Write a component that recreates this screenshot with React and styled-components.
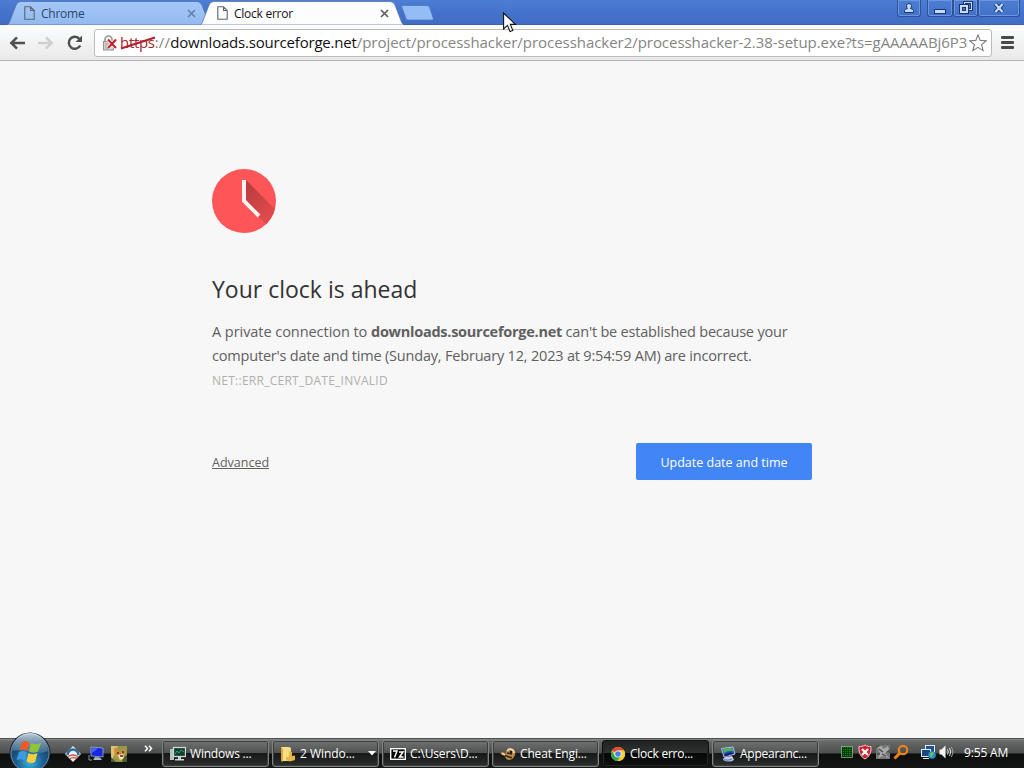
import React from 'react';
import styled, { createGlobalStyle } from 'styled-components';

const GlobalStyle = createGlobalStyle`
    * {
        box-sizing: border-box;
    }
    body {
        margin: 0;
        overflow: hidden;
        font-family: "Open Sans", "Noto Sans", sans-serif;
    }
`;

const tasks = [
    { text: 'Windows ...', icon: 'monitor', spacing: -0.2 },
    { text: '2 Windo...', icon: 'folder', arrow: true, spacing: -0.05 },
    { text: 'C:\\Users\\D...', icon: 'zip', spacing: -0.15 },
    { text: 'Cheat Engi...', icon: 'cheat', spacing: -0.15 },
    { text: 'Clock erro...', icon: 'chrome', active: true, spacing: -0.25 },
    { text: 'Appearanc...', icon: 'display', spacing: -0.25 },
];

const TabShape = ({ active }) => (
    <Shape width="204" height="25" viewBox="0 0 204 25">
        <defs>
            <linearGradient id="tabBack" x1="0" y1="0" x2="0" y2="1">
                <stop offset="0" stopColor="#a4c8f7" />
                <stop offset="1" stopColor="#93b9ef" />
            </linearGradient>
        </defs>
        <path
            d="M0 25 Q1.5 24.500 2.500 22 L9 5 Q10.500 1.500 13.500 1.500 H190 Q193.500 1.500 195 5 L201.500 22 Q202.500 24.500 204 25 Z"
            fill={active ? '#fdfdfe' : 'url(#tabBack)'}
            stroke={active ? '#5575b4' : '#4f70b0'}
            strokeWidth="0.8"
        />
    </Shape>
);

const PageIcon = () => (
    <svg width="11" height="14" viewBox="0 0 11 14" fill="none" stroke="#5c6470" strokeWidth="1.1">
        <path d="M.8 .8H6.5L10.2 4.5V13.2H.8Z M6.5 .8V4.5H10.2" />
    </svg>
);

const CloseIcon = ({ color }) => (
    <svg width="9" height="9" viewBox="0 0 9 9" stroke={color} strokeWidth="1.7">
        <path d="M1 1L8 8M8 1L1 8" />
    </svg>
);

const ArrowIcon = ({ color, flip }) => (
    <svg width="16" height="14" viewBox="0 0 16 14" fill="none" stroke={color} strokeWidth="2.5">
        <path d={flip ? 'M0 7H13.5M8 1.3L13.7 7L8 12.7' : 'M16 7H2.5M8 1.3L2.3 7L8 12.7'} />
    </svg>
);

const ReloadIcon = () => (
    <svg width="16" height="16" viewBox="0 0 16 16">
        <path d="M12.5 4A6 6 0 1 0 13.2 10.5" fill="none" stroke="#505050" strokeWidth="2.5" />
        <path d="M15 .5V7H8.5Z" fill="#505050" />
    </svg>
);

const LockIcon = () => (
    <svg width="16" height="16" viewBox="0 0 16 16">
        <path d="M3 8V4.5A3.5 3.5 0 0 1 10 4.5V8" fill="none" stroke="#96938f" strokeWidth="1.6" />
        <rect x="1.5" y="6.5" width="10" height="8.5" fill="#d4d0ca" stroke="#96938f" />
        <path d="M3 9H8M3 11H7M3 13H8" stroke="#aaa69f" />
        <path d="M6 4.500L14 13M14 4.500L6 13" stroke="#fff" strokeWidth="3.4" />
        <path d="M6 4.500L14 13M14 4.500L6 13" stroke="#c0202c" strokeWidth="2" />
    </svg>
);

const StarIcon = () => (
    <svg width="18" height="18" viewBox="0 0 18 18" fill="#fff" stroke="#7d7d7d" strokeWidth="1.1">
        <path d="M9 .9L11.2 6.4L17.3 6.8L12.6 10.6L14.1 16.6L9 13.3L3.9 16.6L5.4 10.6L.7 6.8L6.8 6.4Z" />
    </svg>
);

const MenuIcon = () => (
    <svg width="13" height="13" viewBox="0 0 13 13" fill="#4a4a4a">
        <rect width="13" height="3" rx="1" />
        <rect y="5" width="13" height="3" rx="1" />
        <rect y="10" width="13" height="3" rx="1" />
    </svg>
);

const ClockIcon = () => (
    <svg width="64" height="64" viewBox="0 0 64 64">
        <defs>
            <clipPath id="face"><circle cx="32" cy="32" r="32" /></clipPath>
            <linearGradient id="shade" x1="32" y1="20" x2="58" y2="46" gradientUnits="userSpaceOnUse">
                <stop offset="0" stopColor="#b93d3f" />
                <stop offset="1" stopColor="#e04a4c" />
            </linearGradient>
        </defs>
        <circle cx="32" cy="32" r="32" fill="#fe5558" />
        <path d="M34 11L66 43V66L46 47.5L34 31Z" fill="url(#shade)" clipPath="url(#face)" />
        <path d="M32 11V32L47 47" fill="none" stroke="#fbf3ef" strokeWidth="4" />
    </svg>
);

const CursorIcon = () => (
    <svg width="14" height="22" viewBox="0 0 14 22">
        <path d="M.6 1V17L4.5 13.4L7 19.6L9.8 18.4L7.3 12.4H12.4Z" fill="#fff" stroke="#111" strokeWidth="1.1" />
    </svg>
);

const StartOrb = () => (
    <svg width="44" height="36" viewBox="0 0 44 36">
        <defs>
            <radialGradient id="orb" cx=".5" cy=".75" r=".7">
                <stop offset="0" stopColor="#39b5df" />
                <stop offset=".5" stopColor="#1c5e91" />
                <stop offset="1" stopColor="#14324f" />
            </radialGradient>
            <linearGradient id="shine" x1="0" y1="0" x2="0" y2="1">
                <stop offset="0" stopColor="#d5e2ec" stopOpacity=".9" />
                <stop offset="1" stopColor="#7ea3bf" stopOpacity=".35" />
            </linearGradient>
        </defs>
        <circle cx="22" cy="21" r="20.5" fill="#17242f" />
        <circle cx="22" cy="21" r="19" fill="url(#orb)" stroke="#6f93ab" strokeWidth="1" />
        <path d="M4 19A18 18 0 0 1 40 19C32 24 13 16 4 19Z" fill="url(#shine)" />
        <path d="M14 10C17 8 19 9 21.500 10.500L19.500 19C17 17 15 17 11.500 18.500Z" fill="#ee5a24" />
        <path d="M23 11C26 12.500 29 12.500 33 11L30 19.500C27 21 24 21 21 19.500Z" fill="#90c43c" />
        <path d="M11 20C14 18.500 17 18.500 19 20.500L17 29C14.500 27 12 27 8.500 28Z" fill="#3c9be0" />
        <path d="M20.500 21C23.500 23 26 22.500 29.500 21L27 30C24 31.500 21 31 18.500 29.500Z" fill="#fbcf3a" />
    </svg>
);

const icons = {
    obama: (
        <>
            <path d="M8 0L16 8L8 16L0 8Z" fill="#e8eef2" />
            <circle cx="8" cy="8" r="5.5" fill="#e9f0f5" />
            <path d="M2.5 9A5.5 5.5 0 0 1 13.5 9" fill="none" stroke="#286a9c" strokeWidth="2.6" />
            <path d="M3 10.5Q8 7.5 13 10.5M4.5 13Q8 10.5 12 12.5" fill="none" stroke="#d64a40" strokeWidth="1.4" />
        </>
    ),
    desktop: (
        <>
            <path d="M3 1L15 2V11L3 10Z" fill="#1727dc" stroke="#9fb3d8" strokeWidth=".8" />
            <path d="M4 2L10 2.5L4 7Z" fill="#4468f6" />
            <path d="M7 11L12 11.5L14 14H5Z" fill="#a9b4c8" />
            <path d="M1 9V14H4" fill="none" stroke="#8894a8" />
        </>
    ),
    dog: (
        <>
            <rect width="16" height="16" fill="#8f9a4c" />
            <path d="M0 0H7L2 12L0 14Z" fill="#e0c16f" />
            <path d="M3 3L5 1L8 5L12 4L14 1L15 6L14 12L9 15L4 11Z" fill="#c98f3f" />
            <path d="M7 9L12 8L13 12L9 14Z" fill="#f3e7c5" />
            <path d="M6 7H8M11 6H13M9 10H12" stroke="#4b3217" strokeWidth="1.4" />
            <path d="M0 11L5 16H0ZM13 11L16 9V16H11Z" fill="#4d5d2d" />
        </>
    ),
    monitor: (
        <>
            <path d="M0 3H4V14H0Z" fill="#b7c2bc" />
            <rect x="3.5" y="1.5" width="12" height="9" fill="#123e31" stroke="#d0d8d4" strokeWidth="1.3" />
            <path d="M5 8L7 5L9 7L11 4L14 6" fill="none" stroke="#3c9c68" />
            <path d="M8 11H11V13H14V14.5H5V13H8Z" fill="#cad3cf" />
        </>
    ),
    folder: (
        <>
            <path d="M1 1H9L11 2V15H1Z" fill="#f7dd84" />
            <path d="M1 1L3 3V16L1 15Z" fill="#d8a936" />
            <path d="M9 5L12 6V10L15 9.500V14L10 15.500L6 14V11H9Z" fill="#e9b645" />
        </>
    ),
    zip: (
        <>
            <rect x=".7" y="2.7" width="14.6" height="10.6" fill="#000" stroke="#fff" strokeWidth="1.4" />
            <path d="M3 5H7L4.5 11.5M9 6H13L9.5 11H13.5" fill="none" stroke="#fff" strokeWidth="1.5" />
        </>
    ),
    cheat: (
        <>
            <path d="M0 7L3 6L5 8L7 4C9 1 15 2 15 6C16 9 13 14 9 14C5 14 6 9 2 9Z" fill="#b98a4b" />
            <path d="M7 5C9 1.500 14 3 14 7M2 7.500L5 8.500" fill="none" stroke="#f2dfb4" strokeWidth="1.5" />
            <path d="M5 10C7 9 8 12 12 11.500M7 7L12 8" fill="none" stroke="#352411" strokeWidth="1.5" />
            <circle cx="11" cy="6" r="1.2" fill="#231407" />
        </>
    ),
    chrome: (
        <>
            <circle cx="8" cy="8" r="7" fill="#f9cf31" />
            <path d="M8 8L1.9 4.5A7 7 0 0 1 14.1 4.5H8Z" fill="#e4473b" />
            <path d="M8 8L4.7 10L1.9 4.5A7 7 0 0 0 7.5 15L11.2 9.9Z" fill="#35a354" />
            <path d="M8 4.5H14.1A7 7 0 0 1 7.5 15L11.2 9.9Z" fill="#f9cf31" />
            <circle cx="8" cy="8" r="3.5" fill="#fff" />
            <circle cx="8" cy="8" r="2.8" fill="#4385ee" />
        </>
    ),
    display: (
        <>
            <path d="M1.500 2.500L13 1L15 8L4 11Z" fill="#2b50c8" stroke="#b5c6ea" />
            <path d="M3 3.500Q8 1 12.500 2.500L13.500 5Q8 4 4 7Z" fill="#4cb848" />
            <path d="M4 9Q9 5 14 7.500L5 10.5Z" fill="#12266e" />
            <path d="M4 11.500L12 10L14 14Q9 17 3 14Z" fill="#c6d2ee" />
            <path d="M4 13.500Q8 15 12 13" stroke="#5976bd" strokeWidth="1.3" fill="none" />
        </>
    ),
    meter: (
        <>
            <rect x="2.5" y="2.5" width="11" height="11" fill="#063c0a" stroke="#9bbd9b" strokeWidth=".7" />
            <path d="M4.5 3V13M6.5 3V13M8.5 3V13M10.5 3V13M12 3V13" stroke="#128a1a" strokeDasharray="1 1" />
        </>
    ),
    shield: (
        <>
            <path d="M8 1C10 2.5 12 2.5 14 2.5C14.5 9 12 13 8 15C4 13 1.5 9 2 2.5C4 2.5 6 2.5 8 1Z" fill="#d0212d" stroke="#ecc8ca" />
            <path d="M5 5L11 11M11 5L5 11" stroke="#fff" strokeWidth="2.2" />
        </>
    ),
    gear: (
        <>
            <rect x="1" y="1" width="14" height="14" fill="#777" />
            <path d="M2 3L6 2L9 5L13 2L14 6L10 9L14 14L8 12L3 14L5 9Z" fill="#a9a9a9" />
            <path d="M4 5L8 8M7 10L11 12M2 10H5" stroke="#444" fill="none" strokeWidth="1.3" />
            <path d="M1 1H6L1 5ZM11 8L15 5V9Z" fill="#555" />
        </>
    ),
    search: (
        <>
            <circle cx="10" cy="6" r="4.2" fill="none" stroke="#f08119" strokeWidth="2.2" />
            <path d="M7 9L1.5 14.5" stroke="#f08119" strokeWidth="3" />
        </>
    ),
    network: (
        <>
            <rect x="5.5" y="1.5" width="9" height="7" fill="#1c5595" stroke="#e1ebf5" />
            <rect x="1.5" y="5.5" width="9" height="7" fill="#174a83" stroke="#e1ebf5" />
            <path d="M3 14.5H9" stroke="#e1ebf5" />
            <circle cx="12" cy="11" r="3.8" fill="#278bd1" />
            <path d="M10 9L13 8L14 10L12 12L12 14L10 12Z" fill="#68c355" />
        </>
    ),
    volume: (
        <>
            <path d="M1.5 5.5H3.5L7.5 1.5V14.5L3.5 10.5H1.5Z" fill="#f4f4f4" />
            <path d="M9.5 5.5Q11 8 9.5 10.5M11.5 4Q14 8 11.5 12" fill="none" stroke="#e5e5e5" />
            <path d="M13.3 3Q16.500 8 13.3 13" fill="none" stroke="#a5a5a5" />
        </>
    ),
};

const Icon = ({ name, size = 16 }) => (
    <svg width={size} height={size} viewBox="0 0 16 16">{icons[name]}</svg>
);

const BrowserTab = ({ title, active }) => (
    <Tab $active={active}>
        <TabShape active={active} />
        <TabContent>
            <PageIcon />
            <TabTitle $active={active}>{title}</TabTitle>
            <CloseIcon color={active ? '#5b5b5b' : '#6681a8'} />
        </TabContent>
    </Tab>
);

const App = () => {
    return (
        <Screen>
            <GlobalStyle />
            <TitleBar>
                <BrowserTab title="Chrome" />
                <BrowserTab title="Clock error" active />
                <svg width="36" height="16" viewBox="0 0 36 16">
                    <path d="M3 .5H26C28 .5 29 1 29.5 2.5L33 12.500C33.5 14.500 33 15 31.5 15H9C7 15 6.5 14.5 5.8 13L2 2.5C1.5 1 1.5 .5 3 .5Z" fill="#94bdf5" stroke="#4f79c2" strokeWidth=".8" />
                </svg>
                <WindowButtons>
                    <WinButton $width={24} $gap={6}>
                        <svg width="12" height="12" viewBox="0 0 12 12" fill="#c5dbf8" stroke="#1c366c" strokeWidth="1">
                            <path d="M1.5 10.5V8.500Q2 7 4.5 6.5Q3.5 5.5 3.5 3.5Q4 1.5 6 1.5T8.5 3.5Q8.5 5.5 7.5 6.5Q10 7 10.5 8.500V10.5Z" />
                        </svg>
                    </WinButton>
                    <WinButton $width={26}>
                        <svg width="14" height="12" viewBox="0 0 14 12"><rect x="1.5" y="7.5" width="11" height="4" fill="#c5dbf8" stroke="#1c366c" /></svg>
                    </WinButton>
                    <WinButton $width={25}>
                        <svg width="14" height="14" viewBox="0 0 14 14">
                            <rect x="4.5" y=".5" width="9" height="9" fill="#c5dbf8" stroke="#1c366c" />
                            <rect x="6.500" y="2.500" width="5" height="5" fill="#4876cc" stroke="#1c366c" />
                            <rect x=".5" y="3.5" width="9" height="9" fill="#c5dbf8" stroke="#1c366c" />
                            <rect x="3.5" y="6.5" width="3" height="3" fill="#4876cc" stroke="#1c366c" />
                        </svg>
                    </WinButton>
                    <WinButton $width={42}>
                        <svg width="12" height="12" viewBox="0 0 12 12">
                            <path d="M2.5 2L9.5 10M9.5 2L2.5 10" stroke="#1c366c" strokeWidth="4" />
                            <path d="M2.5 2L9.5 10M9.5 2L2.5 10" stroke="#c5dbf8" strokeWidth="2.2" />
                        </svg>
                    </WinButton>
                </WindowButtons>
            </TitleBar>
            <Toolbar>
                <NavButtons>
                    <ArrowIcon color="#505050" />
                    <ArrowIcon color="#cfcfcf" flip />
                    <ReloadIcon />
                </NavButtons>
                <AddressBar>
                    <LockIcon />
                    <Url>
                        <Scheme>
                            https
                            <Strike width="37" height="15" viewBox="0 0 37 15"><path d="M1 12.5L35 1.5" stroke="#b0202a" strokeWidth="2" /></Strike>
                        </Scheme>
                        <UrlPart $spacing={0.2}>://</UrlPart>
                        <UrlPart $color="#111" $spacing={-0.19}>downloads.sourceforge.net</UrlPart>
                        <UrlPart $spacing={-0.04}>/project/processhacker/processhacker2/processhacker-2.38-setup.exe?ts=gAAAAABj6P3</UrlPart>
                    </Url>
                    <StarIcon />
                </AddressBar>
                <MenuIcon />
            </Toolbar>
            <Page>
                <Content>
                    <ClockIcon />
                    <Title>Your clock is ahead</Title>
                    <Message>
                        <Line>
                            <Words $spacing={-0.05}>A private connection to </Words>
                            <Words as="b" $spacing={-0.26}>downloads.sourceforge.net</Words>
                            <Words $spacing={-0.2}> can't be established because your</Words>
                        </Line>
                        <Line>
                            <Words $spacing={-0.19}>computer's date and time (Sunday, February 12, 2023 at 9:54:59 AM) are incorrect.</Words>
                        </Line>
                    </Message>
                    <ErrorCode>NET::ERR_CERT_DATE_INVALID</ErrorCode>
                    <Actions>
                        <Advanced>Advanced</Advanced>
                        <UpdateBtn>Update date and time</UpdateBtn>
                    </Actions>
                </Content>
            </Page>
            <TaskBar>
                <Start><StartOrb /></Start>
                <QuickLaunch>
                    <Icon name="obama" />
                    <Icon name="desktop" />
                    <Icon name="dog" />
                </QuickLaunch>
                <More>
                    <svg width="9" height="7" viewBox="0 0 9 7" fill="none" stroke="#fff" strokeWidth="1.5"><path d="M1 .8L3.5 3.5L1 6.2M5 .8L7.5 3.5L5 6.2" /></svg>
                </More>
                <Tasks>
                    {tasks.map((task, index) => (
                        <Task key={index} $active={task.active}>
                            <Icon name={task.icon} />
                            <TaskText $spacing={task.spacing}>{task.text}</TaskText>
                            {task.arrow && <svg width="8" height="5" viewBox="0 0 8 5"><path d="M0 0H8L4 4.5Z" fill="#fff" /></svg>}
                        </Task>
                    ))}
                </Tasks>
                <Tray>
                    <Icon name="meter" />
                    <Icon name="shield" />
                    <Icon name="gear" />
                    <Icon name="search" />
                </Tray>
                <Tray $left={11}>
                    <Icon name="network" />
                    <Icon name="volume" />
                </Tray>
                <Time>9:55 AM</Time>
            </TaskBar>
            <Cursor><CursorIcon /></Cursor>
        </Screen>
    );
}

const Screen = styled.div`
    display: flex;
    flex-direction: column;
    width: 1024px;
    height: 768px;
    background-color: #f7f7f7;
    overflow: hidden;
`;

const TitleBar = styled.div`
    display: flex;
    height: 25px;
    flex: none;
    padding-left: 7px;
    background: linear-gradient(#4d7ed3, #4371c9 60%, #426dc5);
    border-bottom: 1px solid #3e62a6;
`;

const Tab = styled.div`
    display: grid;
    width: 204px;
    height: 25px;
    flex: none;
    margin-right: ${props => props.$active ? '-4px' : '-11px'};
    z-index: ${props => props.$active ? 2 : 1};

    & + svg {
        margin-top: 5px;
    }
`;

const Shape = styled.svg`
    grid-area: 1 / 1;
`;

const TabContent = styled.div`
    grid-area: 1 / 1;
    display: flex;
    align-items: center;
    padding: 1px 15px 0 17px;
`;

const TabTitle = styled.span`
    flex: 1;
    margin-left: 6px;
    font-size: 12px;
    letter-spacing: -0.25px;
    color: ${props => props.$active ? '#111' : '#2b4469'};
`;

const WindowButtons = styled.div`
    display: flex;
    height: 17px;
    margin-left: auto;
    margin-right: 4px;
`;

const WinButton = styled.div`
    display: flex;
    align-items: center;
    justify-content: center;
    width: ${props => props.$width}px;
    margin-right: ${props => props.$gap || 0}px;
    border: 1px solid #2d529b;
    border-top: none;
    border-radius: 0 0 3px 3px;
    box-shadow: inset 0 0 0 1px #6c95de;
`;

const Toolbar = styled.div`
    display: flex;
    align-items: center;
    flex: none;
    height: 36px;
    padding: 0 10px 0 9px;
    background: linear-gradient(#fcfdfe, #e9e9e9);
    border-bottom: 1px solid #b4b4b4;
`;

const NavButtons = styled.div`
    display: flex;
    align-items: center;
    gap: 13px;
    width: 85px;
`;

const AddressBar = styled.div`
    display: flex;
    align-items: center;
    width: 898px;
    height: 28px;
    margin-right: 9px;
    padding: 0 4px 0 7px;
    background-color: #fff;
    border: 1px solid #bdbdb8;
    border-radius: 3px;
`;

const Url = styled.div`
    display: flex;
    flex: 1;
    min-width: 0;
    margin-left: 2px;
    padding-bottom: 2px;
    overflow: hidden;
    white-space: nowrap;
    font-size: 15px;
    line-height: 24px;
`;

const UrlPart = styled.span`
    color: ${props => props.$color || '#858585'};
    letter-spacing: ${props => props.$spacing}px;
`;

const Scheme = styled.span`
    position: relative;
    color: #a8242c;
    letter-spacing: -0.3px;
`;

const Strike = styled.svg`
    position: absolute;
    left: 0;
    top: 6px;
`;

const Page = styled.div`
    flex: 1;
    display: flex;
    justify-content: center;
    padding-top: 108px;
`;

const Content = styled.div`
    width: 600px;
`;

const Title = styled.h1`
    margin: 33px 0 0;
    font-size: 23px;
    font-weight: 400;
    line-height: 36px;
    color: #333;
`;

const Message = styled.div`
    margin-top: 13px;
    font-size: 14.5px;
    line-height: 24px;
    color: #606060;
`;

const Line = styled.div`
    white-space: pre;
`;

const Words = styled.span`
    letter-spacing: ${props => props.$spacing}px;
`;

const ErrorCode = styled.div`
    margin-top: 1px;
    font-size: 12px;
    line-height: 24px;
    letter-spacing: 0.26px;
    color: #b0b0ac;
`;

const Actions = styled.div`
    display: flex;
    align-items: center;
    justify-content: space-between;
    margin-top: 50px;
`;

const Advanced = styled.a`
    padding-top: 2px;
    font-size: 12.5px;
    color: #606060;
    text-decoration: underline;
`;

const UpdateBtn = styled.button`
    width: 176px;
    height: 37px;
    padding: 1px 0 0;
    border: none;
    border-radius: 2px;
    background-color: #4285f4;
    color: #fff;
    font-family: inherit;
    font-size: 12.5px;
    font-weight: 500;
`;

const TaskBar = styled.div`
    display: flex;
    flex: none;
    height: 30px;
    background: linear-gradient(#8b8d8c 0, #686a69 2px, #4d4f4e 14px, #0c0e0d 15px, #151716 100%);
    border-top: 1px solid #4e514f;
`;

const Start = styled.div`
    width: 60px;
    padding-left: 8px;
    margin-top: -7px;
`;

const QuickLaunch = styled.div`
    display: flex;
    align-items: center;
    gap: 7px;
    width: 84px;
    padding-left: 5px;
`;

const More = styled.div`
    display: flex;
    width: 18px;
    padding-top: 6px;
`;

const Tasks = styled.div`
    display: flex;
    gap: 3px;
    padding: 1px 0;
    width: 660px;
`;

const Task = styled.div`
    display: flex;
    align-items: center;
    width: 107px;
    height: 27px;
    padding: 0 2px 0 7px;
    border: 1px solid ${props => props.$active ? '#101211' : '#818382'};
    border-radius: 3px;
    box-shadow: inset 0 0 0 1px ${props => props.$active ? '#242625' : '#3d3f3e'};
    background: ${props => props.$active
        ? 'linear-gradient(#202221, #303231 48%, #050706 50%, #101211)'
        : 'linear-gradient(#707271, #505251 48%, #171918 50%, #2c2e2d)'};
`;

const TaskText = styled.span`
    flex: 1;
    margin-left: 4px;
    font-size: 12px;
    white-space: nowrap;
    color: #fff;
    letter-spacing: ${props => props.$spacing}px;
`;

const Tray = styled.div`
    display: flex;
    align-items: center;
    gap: 2px;
    height: 25px;
    margin-left: ${props => props.$left || 17}px;
`;

const Time = styled.div`
    margin-left: 10px;
    font-size: 12px;
    line-height: 27px;
    letter-spacing: -0.15px;
    white-space: nowrap;
    color: #fff;
`;

const Cursor = styled.div`
    position: absolute;
    left: 503px;
    top: 12px;
    z-index: 5;
`;

export default App;
